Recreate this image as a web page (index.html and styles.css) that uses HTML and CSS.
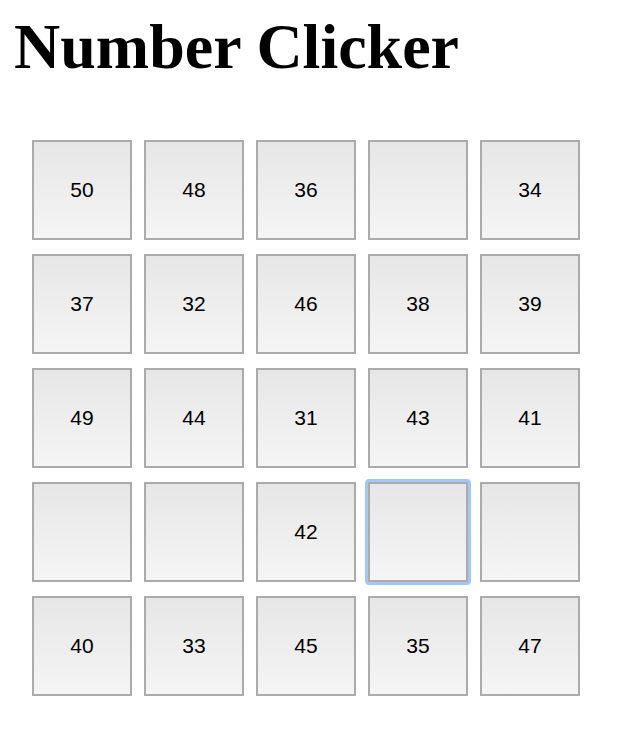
FILE: index.html
```html
<!DOCTYPE html>
<html>
<head>
<meta charset="utf-8">
<title>Number Clicker</title>
<link rel="stylesheet" href="styles.css">
</head>
<body>
<h1 class="title">Number Clicker</h1>
<div class="board">
  <button class="cell">50</button>
  <button class="cell">48</button>
  <button class="cell">36</button>
  <button class="cell"></button>
  <button class="cell">34</button>
  <button class="cell">37</button>
  <button class="cell">32</button>
  <button class="cell">46</button>
  <button class="cell">38</button>
  <button class="cell">39</button>
  <button class="cell">49</button>
  <button class="cell">44</button>
  <button class="cell">31</button>
  <button class="cell">43</button>
  <button class="cell">41</button>
  <button class="cell"></button>
  <button class="cell"></button>
  <button class="cell">42</button>
  <button class="cell cell-focused"></button>
  <button class="cell"></button>
  <button class="cell">40</button>
  <button class="cell">33</button>
  <button class="cell">45</button>
  <button class="cell">35</button>
  <button class="cell">47</button>
</div>
</body>
</html>
```
FILE: styles.css
```css
html, body {
  background: #ffffff;
}
body {
  margin: 8px;
  font-family: "Liberation Serif", "Times New Roman", serif;
}
.title {
  margin: 2px 0 56px 6px;
  font-size: 64px;
  line-height: 74px;
  font-weight: bold;
  color: #000;
}
.board {
  display: grid;
  grid-template-columns: repeat(5, 100px);
  grid-auto-rows: 100px;
  column-gap: 12px;
  row-gap: 14px;
  margin-left: 24px;
}
.cell {
  position: relative;
  box-sizing: border-box;
  width: 100px;
  height: 100px;
  margin: 0;
  padding: 0;
  border: 2px solid #ababab;
  border-radius: 0;
  background: linear-gradient(to bottom, #e6e6e6, #f5f5f5);
  font-family: "Liberation Sans", Arial, Helvetica, sans-serif;
  font-size: 21px;
  color: #000;
  outline: none;
}
.cell-focused::after {
  content: "";
  position: absolute;
  top: -5px;
  left: -5px;
  right: -5px;
  bottom: -5px;
  border: 3px solid #a3c7f6;
  border-radius: 4px;
}
```
